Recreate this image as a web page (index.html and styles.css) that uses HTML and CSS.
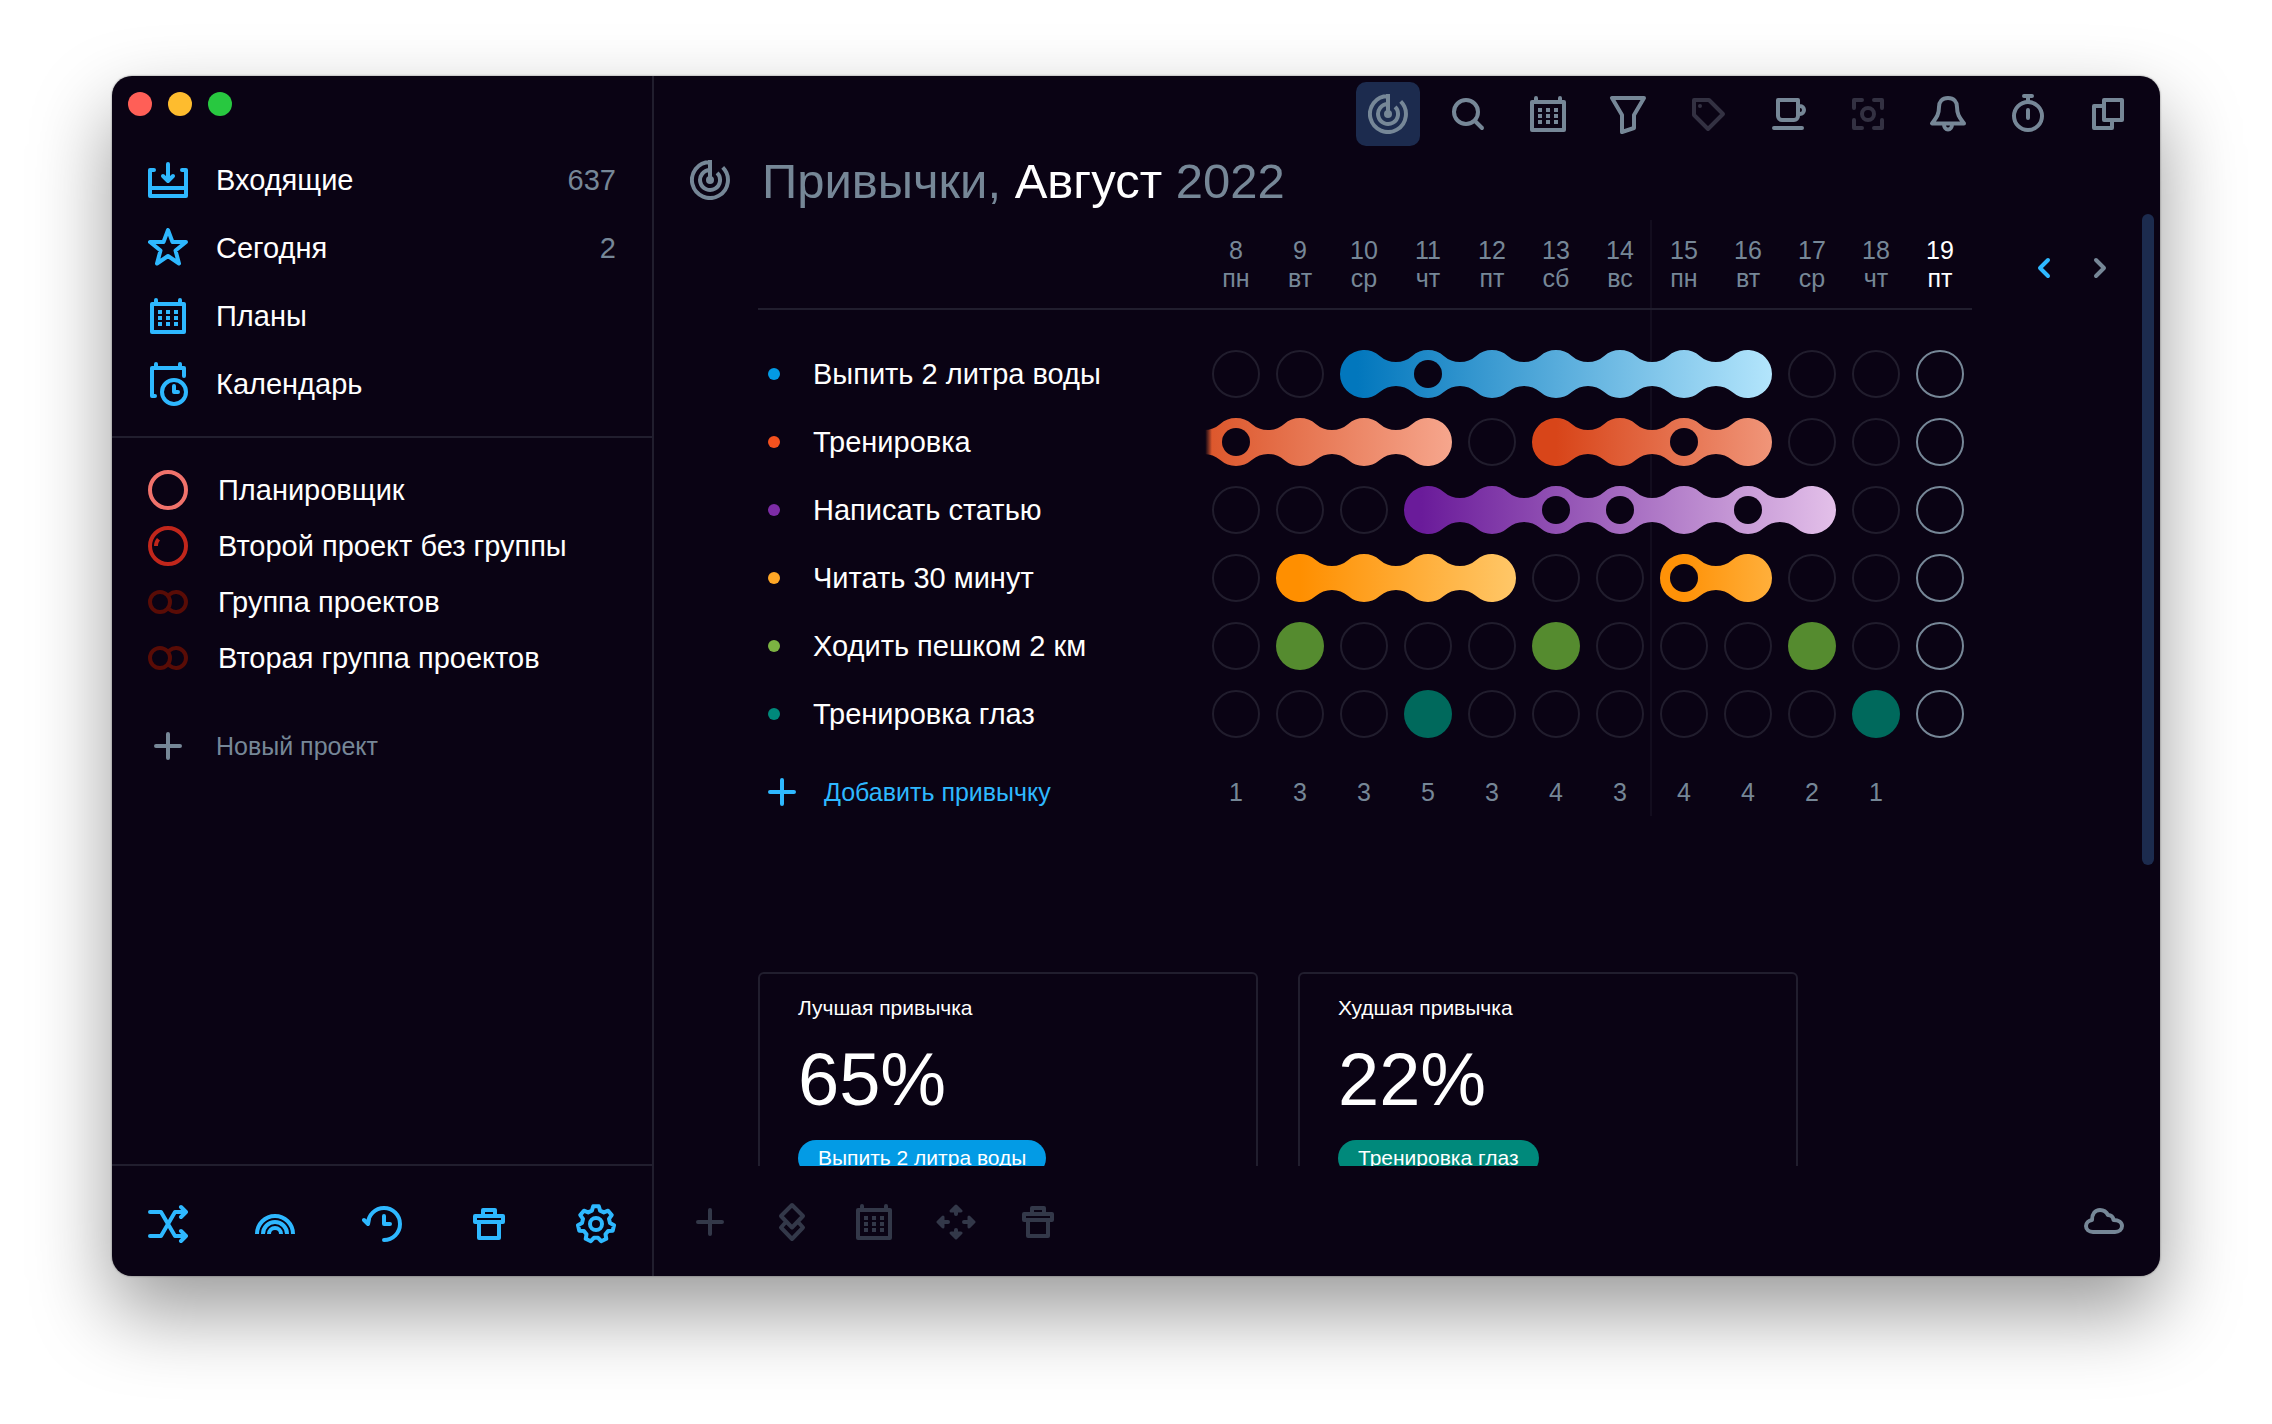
FILE: index.html
```html
<!DOCTYPE html>
<html lang="ru">
<head>
<meta charset="utf-8">
<meta name="viewport" content="width=device-width, initial-scale=1">
<title>Привычки</title>
<link rel="stylesheet" href="styles.css">
</head>
<body>
<svg class="sprite" aria-hidden="true">
  <symbol id="i-inbox" viewBox="0 0 40 40"><path d="M6 10H2V36H38V10H34M2 28H38M20 4V20M15 16l5 5 5-5"/></symbol>
  <symbol id="i-star" viewBox="0 0 40 40"><path d="M20 2L24.500 14H38L27.500 22.500 31 35.500 20 28 9 35.500 12.500 22.500 2 14H15.500Z"/></symbol>
  <symbol id="i-calendar" viewBox="0 0 40 40"><path d="M4 8H36V36H4ZM8 4V8M32 4V8"/><path class="solid" d="M10 14h4v4h-4zM18 14h4v4h-4zM26 14h4v4h-4zM10 20h4v4h-4zM18 20h4v4h-4zM26 20h4v4h-4zM10 26h4v4h-4zM18 26h4v4h-4zM26 26h4v4h-4z"/></symbol>
  <symbol id="i-schedule" viewBox="0 0 40 40" overflow="visible"><path d="M7 32H4V4H36V12M8 0V4M32 0V4M26 22V28H30"/><circle cx="26" cy="28" r="12"/></symbol>
  <symbol id="i-project" viewBox="0 0 40 40"><circle cx="20" cy="20" r="18"/></symbol>
  <symbol id="i-project-started" viewBox="0 0 40 40"><circle cx="20" cy="20" r="18"/><path class="solid" d="M6 20h4c0-2 .5-4 2-5.500l-3-2.500C7 14 6 17 6 20z"/></symbol>
  <symbol id="i-group" viewBox="0 0 40 40"><path d="M21.500 12.400A10 10 0 1 1 21.500 27.600"/><circle cx="12" cy="20" r="10"/></symbol>
  <symbol id="i-plus" viewBox="0 0 40 40"><path d="M20 8V32M8 20H32"/></symbol>
  <symbol id="i-shuffle" viewBox="0 0 40 40"><path d="M2 8H13L27 32H38M2 32H13L27 8H38M33 3l5 5-5 5M33 27l5 5-5 5"/></symbol>
  <symbol id="i-rainbow" viewBox="0 0 40 40"><path class="flat" d="M2 30a18 18 0 0 1 36 0M8 30a12 12 0 0 1 24 0M14 30a6 6 0 0 1 12 0"/></symbol>
  <symbol id="i-history" viewBox="0 0 40 40"><path d="M6 20A16 16 0 1 1 22 36M2 16l4 4 1-5M22 12V20H28"/></symbol>
  <symbol id="i-trash" viewBox="0 0 40 40"><path d="M6 12H34V18H6ZM10 18V34H30V18M14 12V6H26V12"/></symbol>
  <symbol id="i-gear" viewBox="0 0 40 40"><path d="M17.200 2.200L22.800 2.200 24.100 6.600 27.900 8.400 32.100 6.700 35.700 11.100 33 14.900 34 19 38 21.200 36.700 26.700 32.100 27 29.500 30.300 30.300 34.800 25.200 37.200 22.100 33.800 17.900 33.800 14.800 37.200 9.700 34.800 10.500 30.300 7.900 27 3.300 26.700 2 21.200 6 19 7 14.900 4.300 11.100 7.900 6.700 12.100 8.400 15.900 6.600Z"/><circle cx="20" cy="20" r="6"/></symbol>
  <symbol id="i-habits" viewBox="0 0 40 40"><path class="flat" d="M32.700 7.300A18 18 0 1 1 20 2M27.100 12.900A10 10 0 1 1 20 10M20 0V20"/><circle class="solid" cx="20" cy="20" r="4"/></symbol>
  <symbol id="i-search" viewBox="0 0 40 40"><circle cx="18" cy="18" r="12"/><path d="M27 27l7 7"/></symbol>
  <symbol id="i-filter" viewBox="0 0 40 40"><path d="M4 4H36L26 21V34L14 38V21Z"/></symbol>
  <symbol id="i-tag" viewBox="0 0 40 40"><path d="M6 6H21L35 20 20 35 6 21Z"/><circle class="solid" cx="12" cy="12" r="2"/></symbol>
  <symbol id="i-cup" viewBox="0 0 40 40"><path d="M10 6H30V22a4 4 0 0 1-4 4H14a4 4 0 0 1-4-4ZM30 12h2a4 4 0 0 1 0 8h-2M6 34H34"/></symbol>
  <symbol id="i-focus" viewBox="0 0 40 40"><path d="M6 14V6H14M26 6H34V14M34 26V34H26M14 34H6V26"/><circle cx="20" cy="20" r="6"/></symbol>
  <symbol id="i-bell" viewBox="0 0 40 40"><path d="M20 4C14 4 11 8 11 13C11 21 8 24 4 29.500H36C32 24 29 21 29 13C29 8 26 4 20 4ZM16 30.500a4 5 0 0 0 8 0"/></symbol>
  <symbol id="i-timer" viewBox="0 0 40 40"><circle cx="20" cy="22" r="14"/><path d="M16 2H24M20 2V8M20 16V24"/></symbol>
  <symbol id="i-windows" viewBox="0 0 40 40"><path d="M16 6H34V26H16ZM14 12H6V34H24V28"/></symbol>
  <symbol id="i-layers" viewBox="0 0 40 40"><path d="M20 3L31 14 20 25.500 9 14ZM13 21L9 25.500 20 37 31 25.500 27 21"/></symbol>
  <symbol id="i-move" viewBox="0 0 40 40"><path d="M20 8V12M20 32V28M8 20H12M32 20H28"/><path class="tip" d="M20 4l5 5H15ZM20 36l5-5H15ZM2 20l5-5V25ZM38 20l-5-5V25Z"/></symbol>
  <symbol id="i-cloud" viewBox="0 0 40 40"><path d="M9 30C5 30 2 27.500 2 24 2 21 4.500 18.500 8 18 8 12 11 8 16 8c4 0 6.500 2 8 5 3 0 5 2 5.500 5C34.500 18 38 20.500 38 24s-3 6-7 6Z"/></symbol>
  <symbol id="i-prev" viewBox="0 0 40 40"><path d="M24 12l-8 8 8 8"/></symbol>
  <symbol id="i-next" viewBox="0 0 40 40"><path d="M16 12l8 8-8 8"/></symbol>
  <defs>
    <linearGradient id="g-water"><stop offset="0.040" stop-color="#0277bd"/><stop offset="1" stop-color="#b3e5fc"/></linearGradient>
    <linearGradient id="g-train-a"><stop offset="0.005" stop-color="#dd582d" stop-opacity="0"/><stop offset="0.032" stop-color="#dd582d"/><stop offset="1" stop-color="#f6a68d"/></linearGradient>
    <linearGradient id="g-train-b"><stop offset="0.100" stop-color="#d84519"/><stop offset="1" stop-color="#f09579"/></linearGradient>
    <linearGradient id="g-article"><stop offset="0.040" stop-color="#6a1b9a"/><stop offset="1" stop-color="#e3c0e9"/></linearGradient>
    <linearGradient id="g-read-a"><stop offset="0.100" stop-color="#ff8f00"/><stop offset="1" stop-color="#ffc768"/></linearGradient>
    <linearGradient id="g-read-b"><stop offset="0.200" stop-color="#ff9207"/><stop offset="1" stop-color="#ffaf3b"/></linearGradient>
  </defs>
</svg>

<div class="window">
  <aside class="sidebar">
    <div class="lights">
      <button class="light light-close" aria-label="Закрыть"></button>
      <button class="light light-min" aria-label="Свернуть"></button>
      <button class="light light-zoom" aria-label="Развернуть"></button>
    </div>
    <nav class="lists" aria-label="Списки">
      <a href="#inbox"><svg class="icon"><use href="#i-inbox"/></svg><span>Входящие</span><span class="count">637</span></a>
      <a href="#today"><svg class="icon"><use href="#i-star"/></svg><span>Сегодня</span><span class="count">2</span></a>
      <a href="#plans"><svg class="icon"><use href="#i-calendar"/></svg><span>Планы</span></a>
      <a href="#calendar"><svg class="icon"><use href="#i-schedule"/></svg><span>Календарь</span></a>
    </nav>
    <nav class="projects" aria-label="Проекты">
      <a href="#planner"><svg class="icon coral"><use href="#i-project"/></svg><span>Планировщик</span></a>
      <a href="#second"><svg class="icon red"><use href="#i-project-started"/></svg><span>Второй проект без группы</span></a>
      <a href="#group-1"><svg class="icon maroon"><use href="#i-group"/></svg><span>Группа проектов</span></a>
      <a href="#group-2"><svg class="icon maroon"><use href="#i-group"/></svg><span>Вторая группа проектов</span></a>
      <button class="new-project"><svg class="icon"><use href="#i-plus"/></svg><span>Новый проект</span></button>
    </nav>
    <footer class="side-tools">
      <button aria-label="Перемешать"><svg class="icon"><use href="#i-shuffle"/></svg></button>
      <button aria-label="Сферы"><svg class="icon"><use href="#i-rainbow"/></svg></button>
      <button aria-label="История"><svg class="icon"><use href="#i-history"/></svg></button>
      <button aria-label="Корзина"><svg class="icon"><use href="#i-trash"/></svg></button>
      <button aria-label="Настройки"><svg class="icon"><use href="#i-gear"/></svg></button>
    </footer>
  </aside>

  <main class="main">
    <div class="toolbar">
      <button class="selected" aria-label="Привычки" aria-pressed="true"><svg class="icon"><use href="#i-habits"/></svg></button>
      <button aria-label="Поиск"><svg class="icon"><use href="#i-search"/></svg></button>
      <button aria-label="Календарь"><svg class="icon"><use href="#i-calendar"/></svg></button>
      <button aria-label="Фильтр"><svg class="icon"><use href="#i-filter"/></svg></button>
      <button aria-label="Метки" disabled><svg class="icon"><use href="#i-tag"/></svg></button>
      <button aria-label="Перерыв"><svg class="icon"><use href="#i-cup"/></svg></button>
      <button aria-label="Фокус" disabled><svg class="icon"><use href="#i-focus"/></svg></button>
      <button aria-label="Напоминания"><svg class="icon"><use href="#i-bell"/></svg></button>
      <button aria-label="Таймер"><svg class="icon"><use href="#i-timer"/></svg></button>
      <button aria-label="Новое окно"><svg class="icon"><use href="#i-windows"/></svg></button>
    </div>

    <header class="heading">
      <svg class="icon"><use href="#i-habits"/></svg>
      <h1>Привычки, <strong>Август</strong> 2022</h1>
    </header>

    <div class="viewport">
      <div class="content">
        <div class="tracker">
          <table class="habits">
            <colgroup><col><col class="day" span="12"></colgroup>
            <thead>
              <tr>
                <td></td>
                <th id="d8" scope="col">8<br>пн</th>
                <th id="d9" scope="col">9<br>вт</th>
                <th id="d10" scope="col">10<br>ср</th>
                <th id="d11" scope="col">11<br>чт</th>
                <th id="d12" scope="col">12<br>пт</th>
                <th id="d13" scope="col">13<br>сб</th>
                <th id="d14" scope="col">14<br>вс</th>
                <th id="d15" scope="col">15<br>пн</th>
                <th id="d16" scope="col">16<br>вт</th>
                <th id="d17" scope="col">17<br>ср</th>
                <th id="d18" scope="col">18<br>чт</th>
                <th id="d19" scope="col" class="today">19<br>пт</th>
              </tr>
            </thead>
            <tbody>
              <tr class="water">
                <th id="h1" scope="row"><span class="habit">Выпить 2 литра воды</span></th>
                <td><input type="checkbox" aria-labelledby="h1 d8"></td>
                <td><input type="checkbox" aria-labelledby="h1 d9"></td>
                <td><input type="checkbox" aria-labelledby="h1 d10" checked><svg class="chain" width="448" height="48" fill="url(#g-water)"><path d="M47.780 5.920a24.670 24.670 0 0 0 32.440 0a24 24 0 0 1 31.560 0a24.670 24.670 0 0 0 32.440 0a24 24 0 0 1 31.560 0a24.670 24.670 0 0 0 32.440 0a24 24 0 0 1 31.560 0a24.670 24.670 0 0 0 32.440 0a24 24 0 0 1 31.560 0a24.670 24.670 0 0 0 32.440 0a24 24 0 0 1 31.560 0a24.670 24.670 0 0 0 32.440 0a24 24 0 1 1 0 36.160a24.670 24.670 0 0 0 -32.440 0a24 24 0 0 1 -31.560 0a24.670 24.670 0 0 0 -32.440 0a24 24 0 0 1 -31.560 0a24.670 24.670 0 0 0 -32.440 0a24 24 0 0 1 -31.560 0a24.670 24.670 0 0 0 -32.440 0a24 24 0 0 1 -31.560 0a24.670 24.670 0 0 0 -32.440 0a24 24 0 0 1 -31.560 0a24.670 24.670 0 0 0 -32.440 0a24 24 0 1 1 0 -36.160z"/><circle class="skip" cx="96" cy="24" r="14"/></svg></td>
                <td><input type="checkbox" aria-labelledby="h1 d11"></td>
                <td><input type="checkbox" aria-labelledby="h1 d12" checked></td>
                <td><input type="checkbox" aria-labelledby="h1 d13" checked></td>
                <td><input type="checkbox" aria-labelledby="h1 d14" checked></td>
                <td><input type="checkbox" aria-labelledby="h1 d15" checked></td>
                <td><input type="checkbox" aria-labelledby="h1 d16" checked></td>
                <td><input type="checkbox" aria-labelledby="h1 d17"></td>
                <td><input type="checkbox" aria-labelledby="h1 d18"></td>
                <td class="today"><input type="checkbox" aria-labelledby="h1 d19"></td>
              </tr>
              <tr class="train">
                <th id="h2" scope="row"><span class="habit">Тренировка</span></th>
                <td class="linked"><input type="checkbox" aria-labelledby="h2 d8"><svg class="chain" width="256" height="48" fill="url(#g-train-a)"><path d="M0 12A24.670 24.670 0 0 0 16.220 5.920a24 24 0 0 1 31.560 0a24.670 24.670 0 0 0 32.440 0a24 24 0 0 1 31.560 0a24.670 24.670 0 0 0 32.440 0a24 24 0 0 1 31.560 0a24.670 24.670 0 0 0 32.440 0a24 24 0 1 1 0 36.160a24.670 24.670 0 0 0 -32.440 0a24 24 0 0 1 -31.560 0a24.670 24.670 0 0 0 -32.440 0a24 24 0 0 1 -31.560 0a24.670 24.670 0 0 0 -32.440 0a24 24 0 0 1 -31.560 0A24.670 24.670 0 0 0 0 36z"/><circle class="skip" cx="32" cy="24" r="14"/></svg></td>
                <td class="linked"><input type="checkbox" aria-labelledby="h2 d9" checked></td>
                <td class="linked"><input type="checkbox" aria-labelledby="h2 d10" checked></td>
                <td class="linked"><input type="checkbox" aria-labelledby="h2 d11" checked></td>
                <td><input type="checkbox" aria-labelledby="h2 d12"></td>
                <td><input type="checkbox" aria-labelledby="h2 d13" checked><svg class="chain" width="256" height="48" fill="url(#g-train-b)"><path d="M47.780 5.920a24.670 24.670 0 0 0 32.440 0a24 24 0 0 1 31.560 0a24.670 24.670 0 0 0 32.440 0a24 24 0 0 1 31.560 0a24.670 24.670 0 0 0 32.440 0a24 24 0 1 1 0 36.160a24.670 24.670 0 0 0 -32.440 0a24 24 0 0 1 -31.560 0a24.670 24.670 0 0 0 -32.440 0a24 24 0 0 1 -31.560 0a24.670 24.670 0 0 0 -32.440 0a24 24 0 1 1 0 -36.160z"/><circle class="skip" cx="160" cy="24" r="14"/></svg></td>
                <td><input type="checkbox" aria-labelledby="h2 d14" checked></td>
                <td><input type="checkbox" aria-labelledby="h2 d15"></td>
                <td><input type="checkbox" aria-labelledby="h2 d16" checked></td>
                <td><input type="checkbox" aria-labelledby="h2 d17"></td>
                <td><input type="checkbox" aria-labelledby="h2 d18"></td>
                <td class="today"><input type="checkbox" aria-labelledby="h2 d19"></td>
              </tr>
              <tr class="article">
                <th id="h3" scope="row"><span class="habit">Написать статью</span></th>
                <td><input type="checkbox" aria-labelledby="h3 d8"></td>
                <td><input type="checkbox" aria-labelledby="h3 d9"></td>
                <td><input type="checkbox" aria-labelledby="h3 d10"></td>
                <td><input type="checkbox" aria-labelledby="h3 d11" checked><svg class="chain" width="448" height="48" fill="url(#g-article)"><path d="M47.780 5.920a24.670 24.670 0 0 0 32.440 0a24 24 0 0 1 31.560 0a24.670 24.670 0 0 0 32.440 0a24 24 0 0 1 31.560 0a24.670 24.670 0 0 0 32.440 0a24 24 0 0 1 31.560 0a24.670 24.670 0 0 0 32.440 0a24 24 0 0 1 31.560 0a24.670 24.670 0 0 0 32.440 0a24 24 0 0 1 31.560 0a24.670 24.670 0 0 0 32.440 0a24 24 0 1 1 0 36.160a24.670 24.670 0 0 0 -32.440 0a24 24 0 0 1 -31.560 0a24.670 24.670 0 0 0 -32.440 0a24 24 0 0 1 -31.560 0a24.670 24.670 0 0 0 -32.440 0a24 24 0 0 1 -31.560 0a24.670 24.670 0 0 0 -32.440 0a24 24 0 0 1 -31.560 0a24.670 24.670 0 0 0 -32.440 0a24 24 0 0 1 -31.560 0a24.670 24.670 0 0 0 -32.440 0a24 24 0 1 1 0 -36.160z"/><circle class="skip" cx="160" cy="24" r="14"/><circle class="skip" cx="224" cy="24" r="14"/><circle class="skip" cx="352" cy="24" r="14"/></svg></td>
                <td><input type="checkbox" aria-labelledby="h3 d12" checked></td>
                <td><input type="checkbox" aria-labelledby="h3 d13"></td>
                <td><input type="checkbox" aria-labelledby="h3 d14"></td>
                <td><input type="checkbox" aria-labelledby="h3 d15" checked></td>
                <td><input type="checkbox" aria-labelledby="h3 d16"></td>
                <td><input type="checkbox" aria-labelledby="h3 d17" checked></td>
                <td><input type="checkbox" aria-labelledby="h3 d18"></td>
                <td class="today"><input type="checkbox" aria-labelledby="h3 d19"></td>
              </tr>
              <tr class="read">
                <th id="h4" scope="row"><span class="habit">Читать 30 минут</span></th>
                <td><input type="checkbox" aria-labelledby="h4 d8"></td>
                <td><input type="checkbox" aria-labelledby="h4 d9" checked><svg class="chain" width="256" height="48" fill="url(#g-read-a)"><path d="M47.780 5.920a24.670 24.670 0 0 0 32.440 0a24 24 0 0 1 31.560 0a24.670 24.670 0 0 0 32.440 0a24 24 0 0 1 31.560 0a24.670 24.670 0 0 0 32.440 0a24 24 0 1 1 0 36.160a24.670 24.670 0 0 0 -32.440 0a24 24 0 0 1 -31.560 0a24.670 24.670 0 0 0 -32.440 0a24 24 0 0 1 -31.560 0a24.670 24.670 0 0 0 -32.440 0a24 24 0 1 1 0 -36.160z"/></svg></td>
                <td><input type="checkbox" aria-labelledby="h4 d10" checked></td>
                <td><input type="checkbox" aria-labelledby="h4 d11" checked></td>
                <td><input type="checkbox" aria-labelledby="h4 d12" checked></td>
                <td><input type="checkbox" aria-labelledby="h4 d13"></td>
                <td><input type="checkbox" aria-labelledby="h4 d14"></td>
                <td><input type="checkbox" aria-labelledby="h4 d15"><svg class="chain" width="128" height="48" fill="url(#g-read-b)"><path d="M47.780 5.920a24.670 24.670 0 0 0 32.440 0a24 24 0 1 1 0 36.160a24.670 24.670 0 0 0 -32.440 0a24 24 0 1 1 0 -36.160z"/><circle class="skip" cx="32" cy="24" r="14"/></svg></td>
                <td><input type="checkbox" aria-labelledby="h4 d16" checked></td>
                <td><input type="checkbox" aria-labelledby="h4 d17"></td>
                <td><input type="checkbox" aria-labelledby="h4 d18"></td>
                <td class="today"><input type="checkbox" aria-labelledby="h4 d19"></td>
              </tr>
              <tr class="walk">
                <th id="h5" scope="row"><span class="habit">Ходить пешком 2 км</span></th>
                <td><input type="checkbox" aria-labelledby="h5 d8"></td>
                <td><input type="checkbox" aria-labelledby="h5 d9" checked></td>
                <td><input type="checkbox" aria-labelledby="h5 d10"></td>
                <td><input type="checkbox" aria-labelledby="h5 d11"></td>
                <td><input type="checkbox" aria-labelledby="h5 d12"></td>
                <td><input type="checkbox" aria-labelledby="h5 d13" checked></td>
                <td><input type="checkbox" aria-labelledby="h5 d14"></td>
                <td><input type="checkbox" aria-labelledby="h5 d15"></td>
                <td><input type="checkbox" aria-labelledby="h5 d16"></td>
                <td><input type="checkbox" aria-labelledby="h5 d17" checked></td>
                <td><input type="checkbox" aria-labelledby="h5 d18"></td>
                <td class="today"><input type="checkbox" aria-labelledby="h5 d19"></td>
              </tr>
              <tr class="eyes">
                <th id="h6" scope="row"><span class="habit">Тренировка глаз</span></th>
                <td><input type="checkbox" aria-labelledby="h6 d8"></td>
                <td><input type="checkbox" aria-labelledby="h6 d9"></td>
                <td><input type="checkbox" aria-labelledby="h6 d10"></td>
                <td><input type="checkbox" aria-labelledby="h6 d11" checked></td>
                <td><input type="checkbox" aria-labelledby="h6 d12"></td>
                <td><input type="checkbox" aria-labelledby="h6 d13"></td>
                <td><input type="checkbox" aria-labelledby="h6 d14"></td>
                <td><input type="checkbox" aria-labelledby="h6 d15"></td>
                <td><input type="checkbox" aria-labelledby="h6 d16"></td>
                <td><input type="checkbox" aria-labelledby="h6 d17"></td>
                <td><input type="checkbox" aria-labelledby="h6 d18" checked></td>
                <td class="today"><input type="checkbox" aria-labelledby="h6 d19"></td>
              </tr>
            </tbody>
            <tfoot>
              <tr>
                <td><button class="add"><svg class="icon"><use href="#i-plus"/></svg><span>Добавить привычку</span></button></td>
                <td>1</td><td>3</td><td>3</td><td>5</td><td>3</td><td>4</td><td>3</td><td>4</td><td>4</td><td>2</td><td>1</td><td></td>
              </tr>
            </tfoot>
          </table>
          <div class="pager">
            <button class="prev" aria-label="Раньше"><svg class="icon"><use href="#i-prev"/></svg></button>
            <button class="next" aria-label="Позже"><svg class="icon"><use href="#i-next"/></svg></button>
          </div>
        </div>

        <div class="cards">
          <section class="card">
            <h2>Лучшая привычка</h2>
            <p class="percent">65%</p>
            <span class="pill pill-water">Выпить 2 литра воды</span>
          </section>
          <section class="card">
            <h2>Худшая привычка</h2>
            <p class="percent">22%</p>
            <span class="pill pill-eyes">Тренировка глаз</span>
          </section>
        </div>
      </div>
      <div class="thumb"></div>
    </div>

    <footer class="actions">
      <button aria-label="Добавить" disabled><svg class="icon"><use href="#i-plus"/></svg></button>
      <button aria-label="Слои" disabled><svg class="icon"><use href="#i-layers"/></svg></button>
      <button aria-label="Дата" disabled><svg class="icon"><use href="#i-calendar"/></svg></button>
      <button aria-label="Переместить" disabled><svg class="icon"><use href="#i-move"/></svg></button>
      <button aria-label="Удалить" disabled><svg class="icon"><use href="#i-trash"/></svg></button>
      <button class="sync" aria-label="Синхронизация"><svg class="icon"><use href="#i-cloud"/></svg></button>
    </footer>
  </main>
</div>
</body>
</html>
```
FILE: styles.css
```css
:root {
  --bg: #0a0314;
  --line: #211e2e;
  --text: #ffffff;
  --muted: #768797;
  --dim: #333849;
  --accent: #2eb8ff;
  --panel: #1c2b4e;
}

* {
  box-sizing: border-box;
}

body {
  margin: 0;
  padding: 76px 112px 148px;
  background: #ffffff;
  color: var(--text);
  font: 29px/36px "Liberation Sans", Arial, sans-serif;
}

button {
  display: flex;
  align-items: center;
  justify-content: center;
  padding: 0;
  border: 0;
  background: none;
  color: inherit;
  font: inherit;
}

a {
  color: inherit;
  text-decoration: none;
}

h1,
h2,
p {
  margin: 0;
  font-weight: normal;
}

.sprite {
  position: absolute;
  width: 0;
  height: 0;
}

.icon {
  display: block;
  flex: none;
  width: 40px;
  height: 40px;
  overflow: visible;
  fill: none;
  stroke: currentColor;
  stroke-width: 4;
  stroke-linecap: round;
  stroke-linejoin: round;
}

.solid {
  fill: currentColor;
  stroke: none;
}

.flat {
  stroke-linecap: butt;
}

.tip {
  fill: currentColor;
  stroke-width: 3;
}

.window {
  display: grid;
  grid-template-columns: 542px minmax(0, 1fr);
  grid-template-rows: minmax(0, 1fr);
  height: calc(100vh - 224px);
  overflow: hidden;
  border-radius: 20px;
  background: var(--bg);
  box-shadow: 0 0 2px rgba(0, 0, 0, 0.5), 0 36px 80px rgba(0, 0, 0, 0.4);
}

/* Sidebar */

.sidebar {
  display: flex;
  flex-direction: column;
  border-right: 2px solid var(--line);
}

.lights {
  display: flex;
  gap: 16px;
  padding: 16px 16px 30px;
}

.light {
  width: 24px;
  height: 24px;
  border-radius: 50%;
}

.light-close {
  background: #ff5f57;
}

.light-min {
  background: #febc2e;
}

.light-zoom {
  background: #28c840;
}

.lists {
  padding: 0 36px 18px;
  border-bottom: 2px solid var(--line);
}

.lists a {
  display: flex;
  align-items: center;
  gap: 28px;
  height: 68px;
}

.lists .icon,
.side-tools {
  color: var(--accent);
}

.count {
  margin-left: auto;
  color: var(--muted);
}

.projects {
  flex: 1;
  padding: 24px 36px;
}

.projects a {
  display: flex;
  align-items: center;
  gap: 30px;
  height: 56px;
}

.coral {
  color: #f0726b;
}

.red {
  color: #c1261b;
}

.maroon {
  color: #590c06;
}

.new-project {
  gap: 28px;
  height: 56px;
  margin-top: 32px;
  color: var(--muted);
  font-size: 25px;
}

.side-tools {
  display: flex;
  align-items: center;
  justify-content: space-between;
  height: 112px;
  padding: 6px 36px 0;
  border-top: 2px solid var(--line);
}

/* Main column */

.main {
  display: flex;
  flex-direction: column;
  min-width: 0;
}

.toolbar {
  display: flex;
  justify-content: flex-end;
  gap: 16px;
  padding: 6px 20px 0;
  color: var(--muted);
}

.toolbar button {
  width: 64px;
  height: 64px;
  border-radius: 10px;
}

.toolbar .selected {
  background: var(--panel);
}

button:disabled {
  color: var(--dim);
}

.toolbar button:disabled {
  color: #333142;
}

.heading {
  display: flex;
  align-items: center;
  gap: 32px;
  height: 68px;
  padding: 0 36px;
  color: var(--muted);
}

.heading h1 {
  padding-top: 2px;
  font-size: 49px;
  line-height: 56px;
}

.heading strong {
  color: var(--text);
  font-weight: normal;
}

.viewport {
  position: relative;
  flex: 1;
  min-height: 0;
}

.content {
  height: 100%;
  padding: 6px 0 0 104px;
  overflow-y: auto;
  scrollbar-width: none;
}

.thumb {
  position: absolute;
  top: 0;
  right: 6px;
  width: 12px;
  height: calc(68% + 4px);
  border-radius: 6px;
  background: var(--panel);
}

/* Habit table */

.tracker {
  display: flex;
  align-items: flex-start;
}

.habits {
  flex: 1;
  table-layout: fixed;
  border-spacing: 0;
}

.habits col.day {
  width: 64px;
}

.habits th,
.habits td {
  padding: 0;
  font-weight: normal;
}

/* week boundary between Sunday and Monday */
.habits tr > :nth-child(8) {
  background: linear-gradient(#130d1e, #130d1e) right / 2px 100% no-repeat;
}

.habits thead th,
.habits thead td {
  padding: 16px 0;
  border-bottom: 2px solid var(--line);
  color: var(--muted);
  font-size: 25px;
  line-height: 28px;
}

.habits thead .today {
  color: var(--text);
}

.habits tbody td {
  position: relative;
  height: 68px;
}

.habits tbody tr:first-child > * {
  padding-top: 30px;
  height: 98px;
}

.habits tbody th {
  text-align: left;
}

.habit {
  display: flex;
  align-items: center;
  gap: 33px;
  padding-left: 10px;
}

.habit::before {
  content: "";
  width: 12px;
  height: 12px;
  border-radius: 50%;
  background: var(--dot);
}

.water {
  --dot: #039be5;
}

.train {
  --dot: #f4511e;
}

.article {
  --dot: #7d2ca6;
}

.read {
  --dot: #ffa726;
}

.walk {
  --dot: #7cb342;
  --done: #558b2f;
}

.eyes {
  --dot: #00897b;
  --done: #00695c;
}

.habits input {
  display: block;
  width: 48px;
  height: 48px;
  margin: 10px 8px;
  border: 2px solid #211d2d;
  border-radius: 50%;
  appearance: none;
}

.habits input:checked {
  border-color: transparent;
  background: var(--done, none) border-box;
}

.habits .linked input {
  border-color: transparent;
}

.habits .today input {
  border-color: var(--muted);
}

.chain {
  position: absolute;
  left: 0;
  bottom: 10px;
  z-index: 1;
  pointer-events: none;
}

.skip {
  fill: var(--bg);
}

.habits tfoot td {
  height: 68px;
  padding-top: 20px;
  color: var(--muted);
  font-size: 25px;
  text-align: center;
}

.add {
  gap: 22px;
  padding-left: 4px;
  color: var(--accent);
}

.pager {
  display: flex;
  gap: 16px;
  width: 188px;
  padding: 28px 0 0 52px;
  color: var(--muted);
}

.pager .prev {
  color: var(--accent);
}

/* Statistics */

.cards {
  display: flex;
  gap: 40px;
  margin-top: 156px;
}

.card {
  flex: 0 1 500px;
  padding: 20px 38px 40px;
  border: 2px solid var(--line);
  border-radius: 6px;
}

.card h2 {
  font-size: 21px;
  line-height: 28px;
}

.percent {
  margin: 18px 0 20px;
  font-size: 74px;
  line-height: 80px;
}

.pill {
  display: inline-block;
  padding: 0 20px;
  border-radius: 18px;
  font-size: 21px;
  line-height: 36px;
  vertical-align: top;
}

.pill-water {
  background: #039be5;
}

.pill-eyes {
  background: #00897b;
}

.actions {
  display: flex;
  align-items: center;
  gap: 42px;
  height: 110px;
  padding: 2px 36px 0;
}

.sync {
  margin-left: auto;
  color: var(--muted);
}
```
